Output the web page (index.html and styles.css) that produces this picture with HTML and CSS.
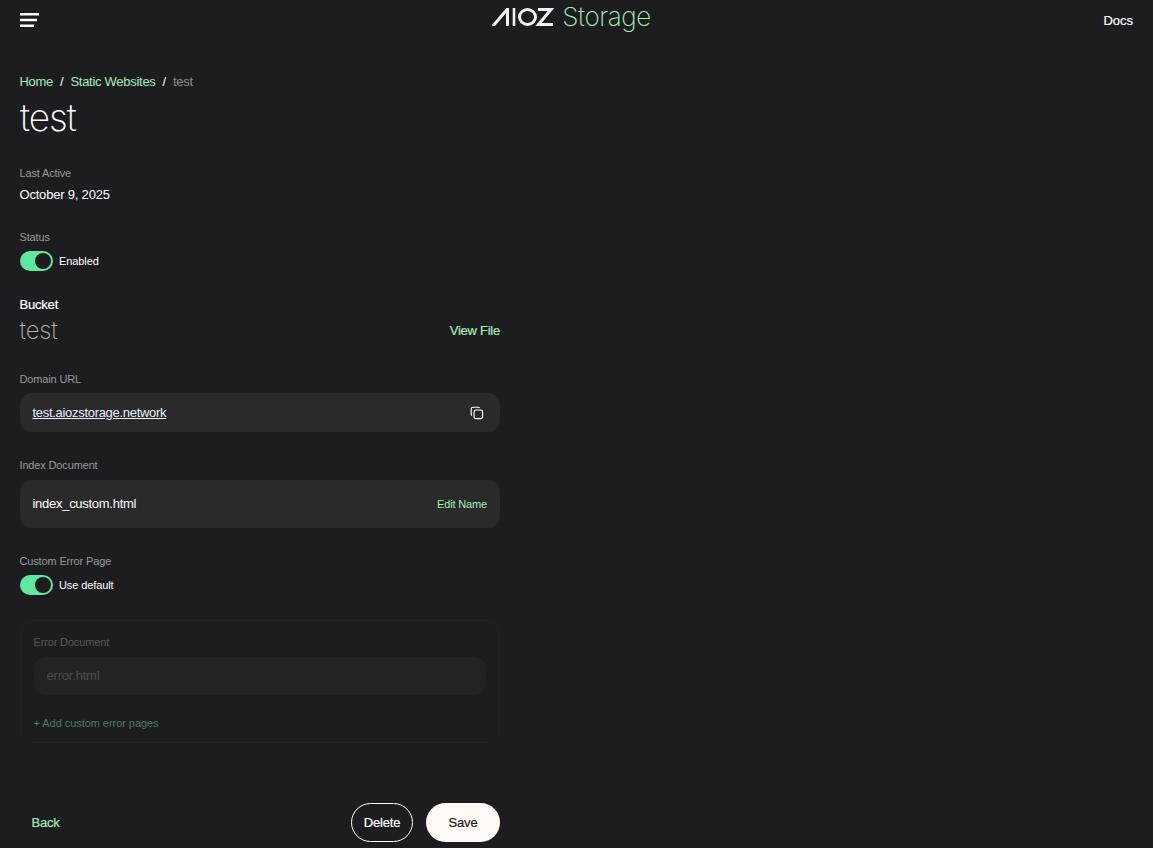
FILE: index.html
```html
<!DOCTYPE html>
<html lang="en">
<head>
<meta charset="utf-8">
<title>test - AIOZ Storage</title>
<link rel="stylesheet" href="styles.css">
</head>
<body>
<header class="topbar">
  <button class="menu-btn" aria-label="Menu">
    <svg width="19" height="14" viewBox="0 0 19 14"><path d="M0 1.2h19M0 7h17M0 12.8h14" stroke="#fff" stroke-width="2.4" fill="none"/></svg>
  </button>
  <a class="logo">
    <svg class="logo-mark" width="62" height="18" viewBox="0 0 62 18" role="img" aria-label="AIOZ">
      <path d="M1 18 15.5 1V18" stroke="#f2f2f2" stroke-width="3" fill="none"/>
      <path d="M22 0V18" stroke="#f2f2f2" stroke-width="2.6" fill="none"/>
      <ellipse cx="35.5" cy="9" rx="8" ry="7.4" stroke="#f2f2f2" stroke-width="3" fill="none"/>
      <path d="M46 1.5H59L46.5 16.5H61" stroke="#f2f2f2" stroke-width="3" fill="none"/>
    </svg>
    <span class="logo-text">Storage</span>
  </a>
  <a class="docs">Docs</a>
</header>
<main class="page">
  <nav class="crumbs"><a>Home</a><span class="sep">/</span><a>Static Websites</a><span class="sep">/</span><span class="current">test</span></nav>
  <h1 class="title">test</h1>

  <section class="meta">
    <div class="label">Last Active</div>
    <div class="date">October 9, 2025</div>
  </section>

  <section class="status">
    <div class="label">Status</div>
    <div class="toggle-row"><span class="toggle"><span class="knob"></span></span><span class="toggle-text">Enabled</span></div>
  </section>

  <section class="bucket">
    <div class="bucket-label">Bucket</div>
    <div class="bucket-row"><span class="bucket-name">test</span><a class="view-file">View File</a></div>
  </section>

  <section class="domain">
    <div class="label">Domain URL</div>
    <div class="field field-url">
      <a class="url">test.aiozstorage.network</a>
      <svg class="copy-icon" width="14" height="14" viewBox="0 0 16 16" fill="none" stroke="#fff" stroke-width="1.3"><rect x="4.6" y="4.6" width="9.8" height="9.8" rx="2"/><path d="M11 2.2C10.6 1.6 10 1.4 9.4 1.4H3.4C2.2 1.4 1.4 2.2 1.4 3.4V9.4C1.4 10 1.6 10.6 2.2 11"/></svg>
    </div>
  </section>

  <section class="index-doc">
    <div class="label">Index Document</div>
    <div class="field field-index"><span class="doc-name">index_custom.html</span><a class="edit">Edit Name</a></div>
  </section>

  <section class="custom-error">
    <div class="label">Custom Error Page</div>
    <div class="toggle-row"><span class="toggle"><span class="knob"></span></span><span class="toggle-text">Use default</span></div>
  </section>

  <section class="error-box">
    <div class="label">Error Document</div>
    <div class="field field-error">error.html</div>
    <a class="add-error">+ Add custom error pages</a>
  </section>

  <footer class="actions">
    <a class="back">Back</a>
    <div class="action-btns">
      <button class="btn btn-outline">Delete</button>
      <button class="btn btn-solid">Save</button>
    </div>
  </footer>
</main>
</body>
</html>
```
FILE: styles.css
```css
* { box-sizing: border-box; }
html, body { margin: 0; height: 100%; }
body {
  background: #1d1d1f;
  color: #fff;
  font-family: "Liberation Sans", Arial, sans-serif;
  font-size: 14px;
  overflow: hidden;
}
a { color: inherit; text-decoration: none; }
.topbar {
  height: 40px;
  display: grid;
  grid-template-columns: 1fr auto 1fr;
  align-items: center;
  padding: 0 20px 0 19.5px;
}
.menu-btn { background: none; border: 0; padding: 0; width: 19px; height: 14px; display: block; }
.menu-btn svg { display: block; }
.logo { display: flex; align-items: center; gap: 8.5px; height: 34px; margin: -6px 10px 0 0; }
.logo-mark { display: block; }
.logo-text { font-family: Inter, "Liberation Sans", sans-serif; font-size: 26px; font-weight: 200; color: #a3ecbd; letter-spacing: -0.45px; margin-top: -2px; }
.docs { justify-self: end; font-size: 13px; font-weight: 400; -webkit-text-stroke: 0.2px #fff; }
.page { width: 500px; padding: 0 0 0 19.5px; display: flex; flex-direction: column; }
.crumbs { margin-top: 34px; height: 16px; line-height: 16px; font-size: 13px; letter-spacing: -0.28px; color: #a3ecbd; display: flex; }
.sep { color: #fff; margin: 0 7px; }
.current { color: #8d8d8f; }
.title { margin: 6px 0 0 0.5px; font-family: Inter, "Liberation Sans", sans-serif; font-size: 37px; line-height: 44px; font-weight: 200; letter-spacing: -1px; }
.label { font-size: 11px; line-height: 14px; color: #98989a; letter-spacing: -0.15px; }
.meta { margin-top: 26px; }
.date { margin-top: 6px; font-size: 13px; line-height: 18px; letter-spacing: -0.2px; }
.status { margin-top: 26px; }
.toggle-row { display: flex; align-items: center; gap: 6px; margin-top: 7px; }
.toggle { width: 33.5px; height: 20px; border-radius: 10px; background: #5fe8a0; display: flex; align-items: center; justify-content: flex-end; padding-right: 2px; flex: none; }
.knob { width: 16px; height: 16px; border-radius: 50%; background: #1d1d1f; }
.toggle-text { font-size: 11px; letter-spacing: -0.1px; }
.bucket { margin-top: 26px; }
.bucket-label { font-size: 13px; line-height: 16px; letter-spacing: -0.2px; -webkit-text-stroke: 0.2px #fff; }
.bucket-row { display: flex; justify-content: space-between; align-items: center; height: 30px; margin-top: 2px; }
.bucket-name { font-family: Inter, "Liberation Sans", sans-serif; font-size: 24px; font-weight: 200; color: #b4b4b6; letter-spacing: -0.15px; }
.view-file { font-size: 13px; color: #a3ecbd; letter-spacing: -0.25px; -webkit-text-stroke: 0.2px #a3ecbd; }
.domain { margin-top: 27px; }
.field { background: #2a2a2a; border-radius: 12px; display: flex; align-items: center; justify-content: space-between; padding: 0 13px; margin-top: 7px; }
.field-url { height: 39px; padding-right: 16px; }
.url { font-size: 13px; text-decoration: underline; color: #e6f0ff; letter-spacing: -0.3px; }
.copy-icon { display: block; }
.index-doc { margin-top: 26px; }
.index-doc .field { margin-top: 8px; }
.field-index { height: 48px; }
.doc-name { font-size: 13px; letter-spacing: -0.28px; margin-top: -1px; }
.edit { font-size: 11px; color: #a3ecbd; letter-spacing: -0.15px; }
.custom-error { margin-top: 26px; }
.error-box { margin-top: 25px; height: 123px; border: 1px solid #222224; border-radius: 12px; padding: 14px 13px 0; }
.error-box .label { color: #58585a; }
.field-error { height: 38px; margin-top: 8px; padding-bottom: 2px; background: #232325; color: #4c4c4e; font-size: 13px; letter-spacing: -0.2px; }
.add-error { display: block; margin-top: 21px; font-size: 11px; line-height: 14px; color: #4d7a60; letter-spacing: -0.05px; }
.actions { display: flex; justify-content: space-between; align-items: center; margin-top: 60px; height: 39px; padding-left: 12px; }
.back { font-size: 13px; color: #a3ecbd; letter-spacing: -0.2px; -webkit-text-stroke: 0.2px #a3ecbd; }
.action-btns { display: flex; gap: 13px; }
.btn { height: 39px; border-radius: 20px; font: 13px "Liberation Sans", Arial, sans-serif; letter-spacing: -0.2px; -webkit-text-stroke: 0.2px currentColor; padding: 0; }
.btn-outline { width: 62px; background: transparent; border: 1px solid #fff; color: #fff; }
.btn-solid { width: 74px; background: #fff9f6; border: 0; color: #1d1d1f; }
```
